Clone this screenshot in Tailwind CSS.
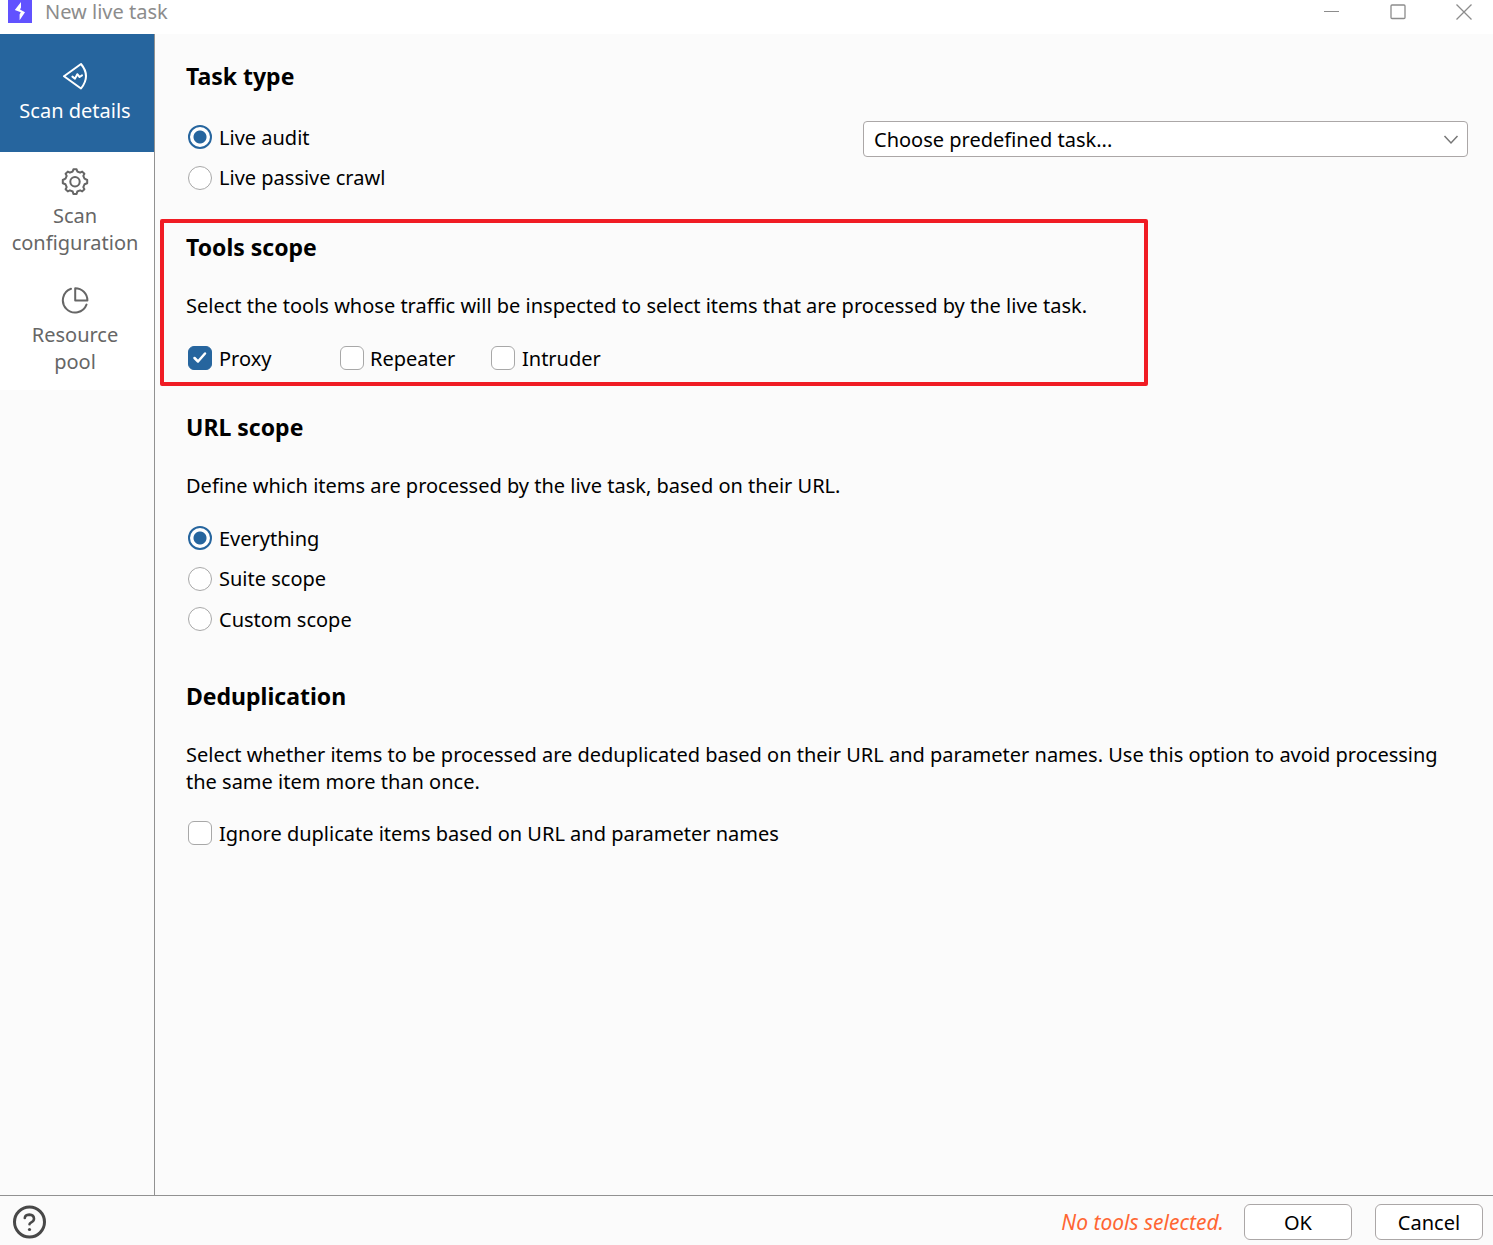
<!DOCTYPE html>
<html lang="en">
<head>
    <meta charset="UTF-8">
    <meta name="viewport" content="width=device-width, initial-scale=1.0">
    <title>New live task</title>
    <script src="https://cdn.jsdelivr.net/npm/@tailwindcss/browser@4"></script>
</head>
<body class="min-h-screen flex flex-col bg-[#fbfbfb] text-black text-[20px] leading-[27px] font-['Noto_Sans','Open_Sans',sans-serif]">
    <!-- Title bar -->
    <header class="h-[34px] shrink-0 bg-white flex items-start text-[#8c8c8c]">
        <svg class="w-6 h-[23px] ml-2" viewBox="0 0 24 23" aria-hidden="true">
            <rect width="24" height="23" fill="#6152ff"/>
            <path d="M13 2V7.6L12 9.4L17 12.3L11.6 20.2V14.6L12.8 12.2L6.8 9.9Z" fill="#fff"/>
        </svg>
        <h1 class="ml-[13px] -mt-[2px]">New live task</h1>
        <div class="ml-auto flex gap-2">
            <button type="button" aria-label="Minimize" class="w-[58px] h-6 flex items-center justify-center">
                <svg class="w-4 h-4" viewBox="0 0 16 16" fill="none" stroke="currentColor"><path d="M0 7.5H15"/></svg>
            </button>
            <button type="button" aria-label="Maximize" class="w-[58px] h-6 flex items-center justify-center">
                <svg class="w-4 h-4" viewBox="0 0 16 16" fill="none" stroke="currentColor" stroke-width="1.3"><rect x="1" y="1" width="14" height="13.5" rx="1"/></svg>
            </button>
            <button type="button" aria-label="Close" class="w-[58px] h-6 flex items-center justify-center">
                <svg class="w-4 h-4" viewBox="0 0 16 16" fill="none" stroke="currentColor" stroke-width="1.3"><path d="M.5.5l15 15M15.5.5l-15 15"/></svg>
            </button>
        </div>
    </header>

    <div class="flex grow">
        <!-- Sidebar -->
        <nav class="w-[155px] shrink-0 border-r border-[#919191] text-center text-[#666]">
            <a href="#details" class="flex flex-col items-center h-[118px] pt-7 pr-1 bg-[#26659e] text-white">
                <svg class="w-7 h-7" viewBox="0 0 28 28" fill="none" stroke="currentColor" stroke-width="2" stroke-linejoin="round" stroke-linecap="round" aria-hidden="true">
                    <path d="M3 14.2L20 2Q30 14 20 26.5Z"/>
                    <path d="M11.4 14.6L14 16.6L16.3 12.2L18.6 15L21 13.4"/>
                </svg>
                <span class="mt-[7px]">Scan details</span>
            </a>
            <a href="#configuration" class="flex flex-col items-center h-[119px] pt-4 pr-1 bg-white">
                <svg class="w-7 h-7" viewBox="0 0 28 28" fill="none" stroke="currentColor" stroke-width="2" stroke-linejoin="round" aria-hidden="true">
                    <path d="M11.7 3.5L12.4 1.3H15.6L16.3 3.5L19.1 4.7L21.2 3.6L23.4 5.8L22.3 7.9L23.5 10.7L26.2 12V15.2L23.5 16.3L22.3 19.1L23.4 21.2L21.2 23.4L19.1 22.3L16.3 23.5L15.6 26H12.4L11.7 23.5L8.9 22.3L6.8 23.4L4.6 21.2L5.7 19.1L4.5 16.3L1.8 15.2V12L4.5 10.7L5.7 7.9L4.6 5.8L6.8 3.6L8.9 4.7Z"/>
                    <circle cx="14" cy="13.7" r="4.7"/>
                </svg>
                <span class="mt-[6px]">Scan<br>configuration</span>
            </a>
            <a href="#pool" class="flex flex-col items-center h-[119px] pt-4 pr-1 bg-white">
                <svg class="w-7 h-7" viewBox="0 0 28 28" fill="none" stroke="currentColor" stroke-width="2" stroke-linecap="round" stroke-linejoin="round" aria-hidden="true">
                    <path d="M10 1.8A12.2 12.2 0 1 0 25.5 17.6"/>
                    <path d="M14.2 1.2V13.4H26.4A12.2 12.2 0 0 0 14.2 1.2Z"/>
                </svg>
                <span class="mt-[6px]">Resource<br>pool</span>
            </a>
        </nav>

        <main class="grow min-w-0 pt-7 pl-[5px]">
            <section id="details" class="pl-[26px] pr-[25px]">
                <h2 class="text-[23px] leading-7 font-bold">Task type</h2>
                <div class="mt-[27px] flex items-start justify-between">
                    <div>
                        <label class="flex items-center h-10 pl-[2px] gap-[7px]">
                            <input type="radio" name="type" checked class="appearance-none size-6 rounded-full border-2 border-[#26659e] bg-[radial-gradient(circle,#26659e_6px,white_7px)]">
                            Live audit
                        </label>
                        <label class="flex items-center h-[41px] pl-[2px] gap-[7px]">
                            <input type="radio" name="type" class="appearance-none size-6 rounded-full border border-[#a8a8a8] bg-white">
                            Live passive crawl
                        </label>
                    </div>
                    <div class="relative mt-1 w-[605px]">
                        <select aria-label="Predefined task" class="appearance-none block w-full h-9 pl-[10px] pr-10 bg-white border border-[#aba7a7] rounded-[4px]">
                            <option>Choose predefined task...</option>
                        </select>
                        <svg class="absolute right-2 top-[10px] w-[18px] h-4 pointer-events-none" viewBox="0 0 18 16" fill="none" stroke="#777" stroke-width="1.5" aria-hidden="true"><path d="M2.5 5L9 12L15.5 5"/></svg>
                    </div>
                </div>
            </section>

            <section class="mt-[21px] max-w-[988px] border-4 border-[#f01c24] rounded-[2px] pt-[10px] pb-3 pl-[22px]">
                <h2 class="text-[23px] leading-7 font-bold">Tools scope</h2>
                <p class="mt-[31px]">Select the tools whose traffic will be inspected to select items that are processed by the live task.</p>
                <div class="mt-[27px] flex pl-[2px]">
                    <label class="flex items-center h-6 w-[152px] gap-[7px]">
                        <span class="relative size-6">
                            <input type="checkbox" checked class="peer block appearance-none size-6 rounded-[6px] border border-[#a8a8a8] bg-white checked:bg-[#26659e] checked:border-[#26659e]">
                            <svg class="absolute inset-0 hidden peer-checked:block pointer-events-none" viewBox="0 0 24 24" fill="none" stroke="white" stroke-width="2.5" stroke-linecap="round" stroke-linejoin="round" aria-hidden="true"><path d="M6.5 12L10 15.5L17 7.5"/></svg>
                        </span>
                        Proxy
                    </label>
                    <label class="flex items-center h-6 w-[151px] gap-[6px]">
                        <input type="checkbox" class="appearance-none size-6 rounded-[6px] border border-[#a8a8a8] bg-white">
                        Repeater
                    </label>
                    <label class="flex items-center h-6 gap-[7px]">
                        <input type="checkbox" class="appearance-none size-6 rounded-[6px] border border-[#a8a8a8] bg-white">
                        Intruder
                    </label>
                </div>
            </section>

            <section class="mt-[27px] pl-[26px] pr-[25px]">
                <h2 class="text-[23px] leading-7 font-bold">URL scope</h2>
                <p class="mt-[31px]">Define which items are processed by the live task, based on their URL.</p>
                <div class="mt-[19px]">
                    <label class="flex items-center h-10 pl-[2px] gap-[7px]">
                        <input type="radio" name="scope" checked class="appearance-none size-6 rounded-full border-2 border-[#26659e] bg-[radial-gradient(circle,#26659e_6px,white_7px)]">
                        Everything
                    </label>
                    <label class="flex items-center h-[41px] pl-[2px] gap-[7px]">
                        <input type="radio" name="scope" class="appearance-none size-6 rounded-full border border-[#a8a8a8] bg-white">
                        Suite scope
                    </label>
                    <label class="flex items-center h-10 pl-[2px] gap-[7px]">
                        <input type="radio" name="scope" class="appearance-none size-6 rounded-full border border-[#a8a8a8] bg-white">
                        Custom scope
                    </label>
                </div>
            </section>

            <section class="mt-[43px] pl-[26px] pr-[25px]">
                <h2 class="text-[23px] leading-7 font-bold">Deduplication</h2>
                <p class="mt-[31px]">Select whether items to be processed are deduplicated based on their URL and parameter names. Use this option to avoid processing the same item more than once.</p>
                <label class="mt-[26px] flex items-center h-6 pl-[2px] gap-[7px]">
                    <input type="checkbox" class="appearance-none size-6 rounded-[6px] border border-[#a8a8a8] bg-white">
                    Ignore duplicate items based on URL and parameter names
                </label>
            </section>
        </main>
    </div>

    <!-- Bottom bar -->
    <footer class="h-[50px] shrink-0 border-t border-[#919191] flex items-center pl-3 pr-[10px] pt-[3px]">
        <button type="button" aria-label="Help">
            <svg class="w-[34px] h-[34px]" viewBox="0 0 34 34" fill="none" stroke="#484848" stroke-width="3" stroke-linecap="round">
                <circle cx="17.5" cy="17" r="15"/>
                <path d="M12.8 13Q13 9.8 17.3 9.6Q22 9.8 22 13.7Q21.9 16 19.3 17.3Q17.5 18.2 17.5 19.2" stroke-width="2.6"/>
                <circle cx="17.5" cy="24.5" r="1.6" fill="#484848" stroke="none"/>
            </svg>
        </button>
        <p class="ml-auto italic text-[21px] text-[#ff6633]">No tools selected.</p>
        <button type="button" class="ml-5 w-[108px] h-9 bg-white border border-[#aba7a7] rounded-[6px]">OK</button>
        <button type="button" class="ml-[23px] w-[108px] h-9 bg-white border border-[#aba7a7] rounded-[6px]">Cancel</button>
    </footer>
</body>
</html>
